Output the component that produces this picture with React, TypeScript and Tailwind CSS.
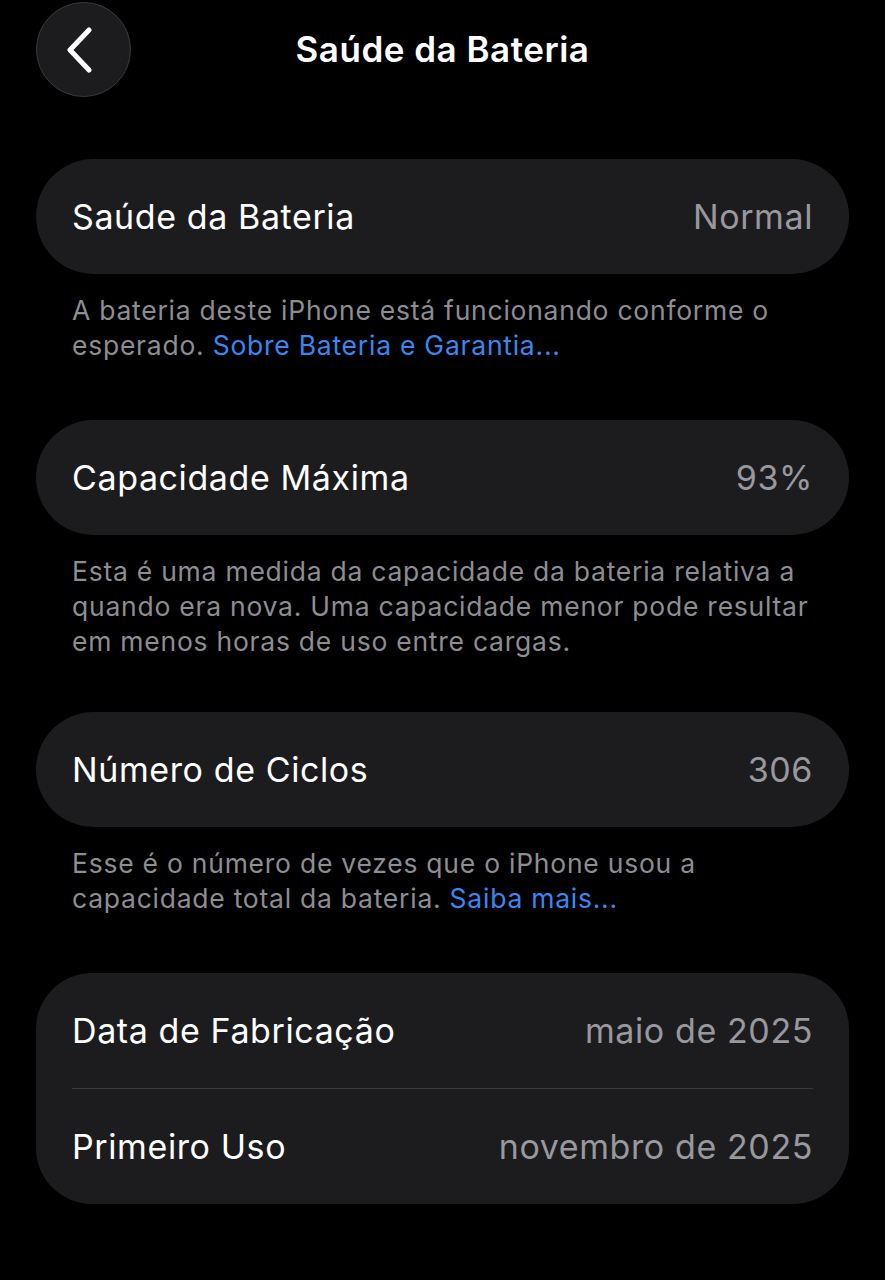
import { type ReactNode } from "react";

function Row({ label, value }: { label: string; value: string }): ReactNode {
  return (
    <div className="flex h-[115px] items-center justify-between">
      <span className="text-white">{label}</span>
      <span className="text-[#98989e]">{value}</span>
    </div>
  );
}

function Note({ children }: { children: ReactNode }): ReactNode {
  return (
    <p className="px-[36px] mt-[19px] text-[26.5px] leading-[35px] text-[#8d8d93] tracking-[0.75px]">
      {children}
    </p>
  );
}

export default function App(): ReactNode {
  return (
    <div
      className="min-h-[1280px] w-[885px] bg-black text-[34px] tracking-[0.6px]"
      style={{ fontFamily: "Inter, 'Noto Sans', sans-serif" }}
    >
      <header className="relative flex h-[98px] items-center justify-center">
        <button
          type="button"
          className="absolute left-[36px] top-[2px] flex size-[95px] items-center justify-center rounded-full border border-[#3a3a3c] bg-[#1c1c1e] pr-[10px]"
        >
          <svg width="30" height="46" viewBox="0 0 30 46" fill="none">
            <path
              d="M25 3 L6 23 L25 43"
              stroke="white"
              strokeWidth="5"
              strokeLinecap="round"
              strokeLinejoin="round"
            />
          </svg>
        </button>
        <h1 className="text-[35px] font-semibold tracking-[0.5px] text-white">Saúde da Bateria</h1>
      </header>

      <main className="px-[36px] pt-[61px]">
        <section className="rounded-full bg-[#1c1c1e] px-[36px]">
          <Row label="Saúde da Bateria" value="Normal" />
        </section>
        <Note>
          A bateria deste iPhone está funcionando conforme o
          <br />
          esperado. <span className="text-[#3a87f2]">Sobre Bateria e Garantia...</span>
        </Note>

        <section className="mt-[57px] rounded-full bg-[#1c1c1e] px-[36px]">
          <Row label="Capacidade Máxima" value="93%" />
        </section>
        <Note>
          Esta é uma medida da capacidade da bateria relativa a
          <br />
          quando era nova. Uma capacidade menor pode resultar
          <br />
          em menos horas de uso entre cargas.
        </Note>

        <section className="mt-[53px] rounded-full bg-[#1c1c1e] px-[36px]">
          <Row label="Número de Ciclos" value="306" />
        </section>
        <Note>
          Esse é o número de vezes que o iPhone usou a
          <br />
          capacidade total da bateria. <span className="text-[#3a87f2]">Saiba mais...</span>
        </Note>

        <section className="mt-[57px] rounded-[56px] bg-[#1c1c1e] px-[36px]">
          <Row label="Data de Fabricação" value="maio de 2025" />
          <div className="h-px bg-[#3a3a3c]" />
          <Row label="Primeiro Uso" value="novembro de 2025" />
        </section>
      </main>
    </div>
  );
}
